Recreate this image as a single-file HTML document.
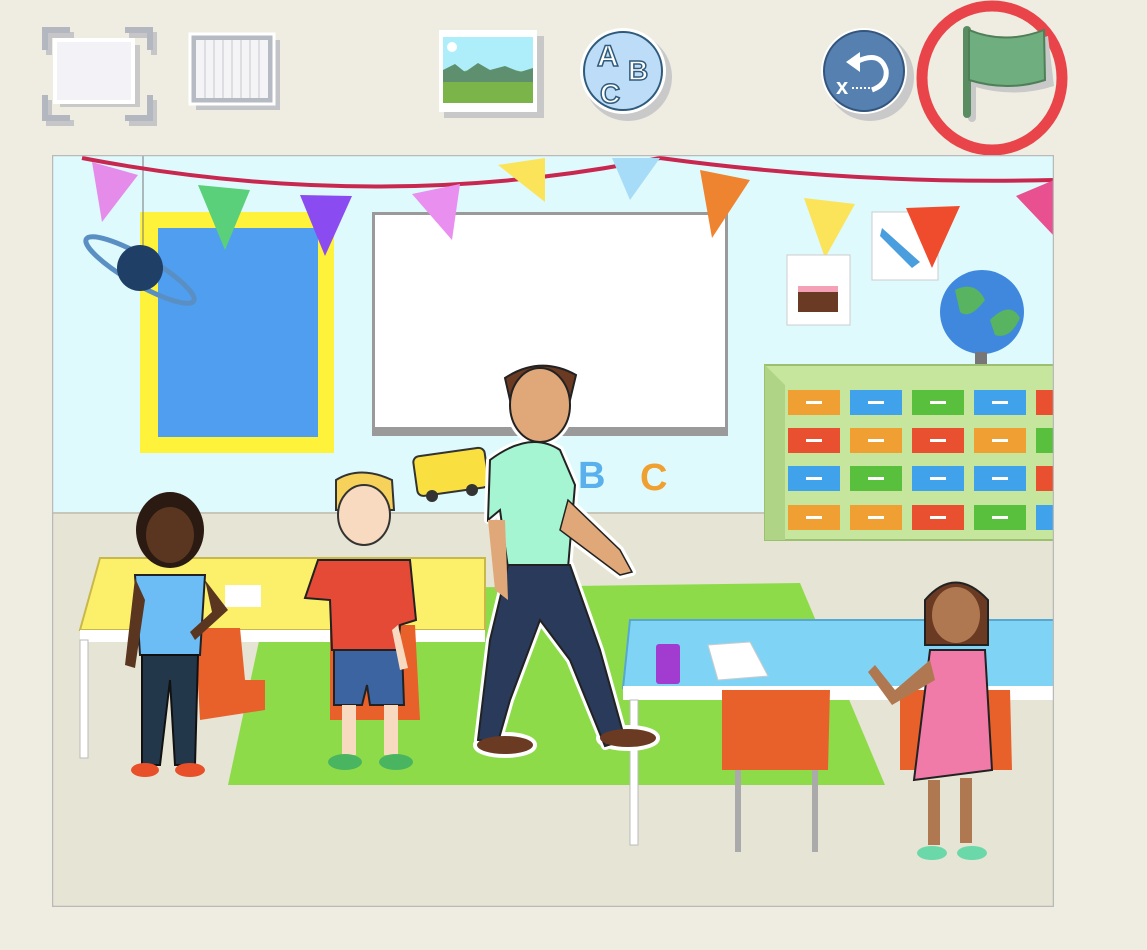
<!DOCTYPE html>
<html><head><style>
html,body{margin:0;padding:0;width:1147px;height:950px;overflow:hidden;background:#efece2;font-family:"Liberation Sans",sans-serif}
</style></head><body>
<svg width="1147" height="950" viewBox="0 0 1147 950" xmlns="http://www.w3.org/2000/svg">
<rect width="1147" height="950" fill="#efece2"/>
<!-- toolbar -->
<g>
 <g fill="none" stroke="#c6c6c8" stroke-width="6" transform="translate(4,5)">
  <path d="M45 50 V30 H70 M125 30 H150 V50 M45 95 V118 H70 M125 118 H150 V95"/>
 </g>
 <g fill="none" stroke="#b3b7c0" stroke-width="6">
  <path d="M45 50 V30 H70 M125 30 H150 V50 M45 95 V118 H70 M125 118 H150 V95"/>
 </g>
 <rect x="60" y="45" width="80" height="62" fill="#c9c9c9"/>
 <rect x="55" y="40" width="78" height="62" fill="#f3f2f6" stroke="#fff" stroke-width="4"/>
 <rect x="196" y="40" width="84" height="70" fill="#c3c4c8"/>
 <rect x="190" y="34" width="84" height="70" fill="#b5bac3" stroke="#fff" stroke-width="3"/>
 <rect x="196" y="40" width="72" height="58" fill="#f4f4f6"/>
 <g stroke="#d6d7dc" stroke-width="1.5"><line x1="205" y1="40" x2="205" y2="98"/><line x1="214" y1="40" x2="214" y2="98"/><line x1="223" y1="40" x2="223" y2="98"/><line x1="232" y1="40" x2="232" y2="98"/><line x1="241" y1="40" x2="241" y2="98"/><line x1="250" y1="40" x2="250" y2="98"/><line x1="259" y1="40" x2="259" y2="98"/></g>
 <rect x="444" y="36" width="100" height="82" fill="#c8c8c8"/>
 <rect x="439" y="30" width="98" height="82" fill="#fff"/>
 <rect x="443" y="37" width="90" height="66" fill="#aeeefb"/>
 <path d="M443 82 Q470 60 490 80 Q515 62 533 78 L533 103 L443 103Z" fill="#7bb54a"/>
 <path d="M443 70 L455 64 L465 72 L478 63 L490 70 L505 66 L520 72 L533 68 L533 82 L443 82Z" fill="#5e8f6e"/>
 <circle cx="452" cy="47" r="5" fill="#fff"/>
 <ellipse cx="628" cy="77" rx="44" ry="44" fill="#c9c9c9"/>
 <circle cx="623" cy="71" r="43" fill="#fff"/>
 <circle cx="623" cy="71" r="39" fill="#bcdcf8" stroke="#2f5a7a" stroke-width="2"/>
 <text x="597" y="66" font-size="30" font-weight="bold" fill="#fff" stroke="#2f5a7a" stroke-width="1.5">A</text>
 <text x="628" y="80" font-size="28" font-weight="bold" fill="#fff" stroke="#2f5a7a" stroke-width="1.5">B</text>
 <text x="600" y="103" font-size="28" font-weight="bold" fill="#fff" stroke="#2f5a7a" stroke-width="1.5">C</text>
 <circle cx="870" cy="77" r="44" fill="#c9c9c9"/>
 <circle cx="864" cy="71" r="43" fill="#fff"/>
 <circle cx="864" cy="71" r="40" fill="#5580b0" stroke="#34557c" stroke-width="2"/>
 <path d="M856 62 Q880 50 886 70 Q888 84 872 90" fill="none" stroke="#fff" stroke-width="5"/>
 <path d="M846 62 L860 52 L860 72Z" fill="#fff"/>
 <text x="836" y="94" font-size="22" font-weight="bold" fill="#fff">x</text>
 <line x1="852" y1="88" x2="880" y2="88" stroke="#fff" stroke-width="2" stroke-dasharray="2 2"/>
 <ellipse cx="992" cy="78" rx="70" ry="72" fill="none" stroke="#e8444a" stroke-width="11"/>
 <rect x="968" y="30" width="8" height="92" rx="4" fill="#c8c8c8"/>
 <path d="M966 28 Q1005 45 1044 32 L1050 82 Q1010 95 968 82Z" fill="#c9c9c9" transform="translate(4,4)"/>
 <rect x="963" y="26" width="8" height="92" rx="4" fill="#5a8c62"/>
 <path d="M969 30 Q1005 45 1044 30 L1045 80 Q1008 92 969 80Z" fill="#6fae7e" stroke="#4f7f58" stroke-width="2"/>
</g>
<!-- canvas -->
<svg x="52" y="155" width="1002" height="752" viewBox="52 155 1002 752" overflow="hidden">
 <rect x="52" y="155" width="1002" height="752" fill="#dffafd"/>
 <rect x="52" y="513" width="1002" height="394" fill="#e6e4d4"/>
 <line x1="52" y1="513" x2="1054" y2="513" stroke="#c8c6b8" stroke-width="2"/>
 <!-- window -->
 <rect x="140" y="212" width="194" height="241" fill="#fff23a"/>
 <rect x="158" y="228" width="160" height="209" fill="#4f9ef0"/>
 <line x1="143" y1="155" x2="143" y2="250" stroke="#777" stroke-width="1"/>
 <ellipse cx="140" cy="270" rx="62" ry="14" transform="rotate(30 140 270)" fill="none" stroke="#5a8fc4" stroke-width="5"/>
 <circle cx="140" cy="268" r="23" fill="#1f3f66"/>
 <!-- whiteboard -->
 <rect x="372" y="212" width="356" height="224" fill="#9a9a9a"/>
 <rect x="375" y="215" width="350" height="212" fill="#fff"/>
 <!-- bunting -->
 <path d="M82 158 Q380 215 660 158 Q860 185 1054 180" fill="none" stroke="#c8284f" stroke-width="4"/>
 <polygon points="92,162 138,175 102,222" fill="#e58cea"/>
 <polygon points="198,185 250,190 225,250" fill="#5ad07a"/>
 <polygon points="300,195 352,196 325,256" fill="#8a4cf0"/>
 <polygon points="412,194 460,184 452,240" fill="#e88ff0"/>
 <polygon points="498,165 545,158 545,202" fill="#fbe35a"/>
 <polygon points="612,158 660,158 630,200" fill="#a7dcf8"/>
 <polygon points="700,170 750,180 712,238" fill="#ef8430"/>
 <polygon points="804,198 855,204 825,258" fill="#fbe35a"/>
 <!-- posters -->
 <rect x="787" y="255" width="63" height="70" fill="#fff" stroke="#ccc"/>
 <rect x="798" y="288" width="40" height="24" fill="#6b3a24"/><rect x="798" y="286" width="40" height="6" fill="#f4a0b6"/>
 <rect x="872" y="212" width="66" height="68" fill="#fff" stroke="#ccc"/>
 <path d="M882 228 L920 262 L912 268 L880 236Z" fill="#4a9ede"/>
 <polygon points="906,208 960,206 932,268" fill="#ee4c2c"/>
 <polygon points="1016,196 1054,180 1054,236" fill="#e85090"/>
 <!-- globe -->
 <circle cx="982" cy="312" r="42" fill="#3f88de"/>
 <path d="M955 290 Q975 280 985 300 Q970 320 960 312Z M990 320 Q1010 300 1020 318 Q1010 340 995 335Z" fill="#58b460"/>
 <rect x="975" y="352" width="12" height="12" fill="#777"/><ellipse cx="980" cy="370" rx="22" ry="5" fill="#777"/>
 <!-- shelf -->
 <polygon points="765,365 1054,365 1054,540 765,540" fill="#c5e69c" stroke="#9ac070" stroke-width="2"/>
 <polygon points="765,365 785,385 785,540 765,540" fill="#b0d486"/>
 <g>
 <rect x="788" y="390" width="52" height="25" fill="#f0a032"/><rect x="850" y="390" width="52" height="25" fill="#3fa2ea"/><rect x="912" y="390" width="52" height="25" fill="#58c03c"/><rect x="974" y="390" width="52" height="25" fill="#3fa2ea"/><rect x="1036" y="390" width="20" height="25" fill="#e85030"/>
 <rect x="788" y="428" width="52" height="25" fill="#e85030"/><rect x="850" y="428" width="52" height="25" fill="#f0a032"/><rect x="912" y="428" width="52" height="25" fill="#e85030"/><rect x="974" y="428" width="52" height="25" fill="#f0a032"/><rect x="1036" y="428" width="20" height="25" fill="#58c03c"/>
 <rect x="788" y="466" width="52" height="25" fill="#3fa2ea"/><rect x="850" y="466" width="52" height="25" fill="#58c03c"/><rect x="912" y="466" width="52" height="25" fill="#3fa2ea"/><rect x="974" y="466" width="52" height="25" fill="#3fa2ea"/><rect x="1036" y="466" width="20" height="25" fill="#e85030"/>
 <rect x="788" y="505" width="52" height="25" fill="#f0a032"/><rect x="850" y="505" width="52" height="25" fill="#f0a032"/><rect x="912" y="505" width="52" height="25" fill="#e85030"/><rect x="974" y="505" width="52" height="25" fill="#58c03c"/><rect x="1036" y="505" width="20" height="25" fill="#3fa2ea"/>
 </g>
 <g fill="#fff"><rect x="806" y="401" width="16" height="3"/><rect x="868" y="401" width="16" height="3"/><rect x="930" y="401" width="16" height="3"/><rect x="992" y="401" width="16" height="3"/><rect x="806" y="439" width="16" height="3"/><rect x="868" y="439" width="16" height="3"/><rect x="930" y="439" width="16" height="3"/><rect x="992" y="439" width="16" height="3"/><rect x="806" y="477" width="16" height="3"/><rect x="868" y="477" width="16" height="3"/><rect x="930" y="477" width="16" height="3"/><rect x="992" y="477" width="16" height="3"/><rect x="806" y="516" width="16" height="3"/><rect x="868" y="516" width="16" height="3"/><rect x="930" y="516" width="16" height="3"/><rect x="992" y="516" width="16" height="3"/></g>
 <!-- bus + letters -->
 <rect x="415" y="452" width="72" height="40" rx="6" fill="#f9e040" stroke="#333" stroke-width="2" transform="rotate(-8 450 472)"/>
 <circle cx="432" cy="496" r="6" fill="#333"/><circle cx="472" cy="490" r="6" fill="#333"/>
 <text x="578" y="488" font-size="38" font-weight="bold" fill="#5ab0ec">B</text>
 <text x="640" y="490" font-size="38" font-weight="bold" fill="#f0a030">C</text>
 <!-- rug -->
 <polygon points="270,590 800,583 885,785 228,785" fill="#8edb4a"/>
 <!-- yellow table -->
 <polygon points="100,558 485,558 485,630 80,630" fill="#fcf06a" stroke="#c8b84a" stroke-width="2"/>
 <rect x="80" y="630" width="405" height="12" fill="#fff"/>
 <rect x="80" y="640" width="8" height="118" fill="#fff" stroke="#bbb"/>
 <rect x="225" y="585" width="36" height="22" fill="#fff"/>
 <!-- chairs -->
 <path d="M195 628 L240 628 L245 680 L265 680 L265 710 L200 720Z" fill="#e8612b"/>
 <path d="M330 625 L415 625 L420 720 L330 720Z" fill="#e8612b"/>
 <!-- blue table -->
 <polygon points="630,620 1054,620 1054,688 623,688" fill="#7fd4f5" stroke="#56a8d0" stroke-width="2"/>
 <rect x="623" y="686" width="431" height="14" fill="#fff"/>
 <rect x="630" y="700" width="8" height="145" fill="#fff" stroke="#bbb"/>
 <rect x="656" y="644" width="24" height="40" rx="3" fill="#a23cd0"/>
 <polygon points="708,645 750,642 768,676 718,680" fill="#fff" stroke="#ccc"/>
 <path d="M722 690 L830 690 L828 770 L722 770Z" fill="#e8612b"/>
 <rect x="735" y="770" width="6" height="82" fill="#aaa"/><rect x="812" y="770" width="6" height="82" fill="#aaa"/>
 <path d="M900 690 L1010 690 L1012 770 L900 770Z" fill="#e8612b"/>
 <!-- girl left -->
 <g>
  <ellipse cx="170" cy="530" rx="34" ry="38" fill="#2a1a12"/>
  <ellipse cx="170" cy="535" rx="24" ry="28" fill="#5a3620"/>
  <path d="M135 575 L205 575 L200 655 L140 655Z" fill="#6cbcf5" stroke="#222" stroke-width="2"/>
  <path d="M142 655 L198 655 L195 765 L175 765 L170 680 L160 765 L142 765Z" fill="#22384a" stroke="#111" stroke-width="2"/>
  <path d="M135 578 L125 665 L135 668 L145 600Z M205 580 L228 610 L195 640 L190 632 L212 612Z" fill="#5a3620"/>
  <ellipse cx="145" cy="770" rx="14" ry="7" fill="#e8502a"/><ellipse cx="190" cy="770" rx="15" ry="7" fill="#e8502a"/>
 </g>
 <!-- boy -->
 <g>
  <path d="M336 480 Q360 465 392 480 L394 510 L336 510Z" fill="#f7d25a" stroke="#333" stroke-width="2"/>
  <ellipse cx="364" cy="515" rx="26" ry="30" fill="#f8dac0" stroke="#333" stroke-width="2"/>
  <path d="M318 560 L410 560 L416 620 L400 625 L398 650 L332 650 L330 600 L305 598Z" fill="#e54a36" stroke="#222" stroke-width="2"/>
  <path d="M334 650 L402 650 L404 705 L370 705 L367 685 L362 705 L334 705Z" fill="#3c64a0" stroke="#222" stroke-width="2"/>
  <rect x="342" y="705" width="14" height="50" fill="#f8dac0"/><rect x="384" y="705" width="14" height="50" fill="#f8dac0"/>
  <ellipse cx="345" cy="762" rx="17" ry="8" fill="#4ab560"/><ellipse cx="396" cy="762" rx="17" ry="8" fill="#4ab560"/>
  <path d="M398 625 L408 668 L400 670 L392 630Z" fill="#f8dac0"/>
 </g>
 <!-- man -->
 <g stroke="#fff" stroke-width="8" stroke-linejoin="round" fill="#fff">
  <ellipse cx="540" cy="405" rx="30" ry="37"/>
  <path d="M490 460 Q530 430 560 450 L575 485 L568 568 L508 568 L500 510 L488 520Z"/>
  <path d="M508 565 L570 565 L600 650 L625 740 L605 746 L570 660 L540 620 L510 700 L498 742 L478 740 L490 640Z"/>
  <path d="M568 500 L620 550 L632 572 L620 575 L600 560 L560 530Z"/>
  <ellipse cx="505" cy="745" rx="28" ry="9"/><ellipse cx="628" cy="738" rx="28" ry="9"/>
 </g>
 <g>
  <path d="M505 378 Q540 355 576 375 L570 400 L510 400Z" fill="#6b3a22" stroke="#222" stroke-width="2"/>
  <ellipse cx="540" cy="405" rx="30" ry="37" fill="#e0a878" stroke="#222" stroke-width="2"/>
  <path d="M490 460 Q530 430 560 450 L575 485 L568 568 L508 568 L500 510 L488 520Z" fill="#a6f5d2" stroke="#222" stroke-width="2"/>
  <path d="M508 565 L570 565 L600 650 L625 740 L605 746 L570 660 L540 620 L510 700 L498 742 L478 740 L490 640Z" fill="#2a3a5a" stroke="#222" stroke-width="2"/>
  <ellipse cx="505" cy="745" rx="28" ry="9" fill="#6b3a22"/><ellipse cx="628" cy="738" rx="28" ry="9" fill="#6b3a22"/>
  <path d="M488 520 L495 590 L508 600 L505 520Z" fill="#e0a878"/>
  <path d="M568 500 L620 550 L632 572 L620 575 L600 560 L560 530Z" fill="#e0a878" stroke="#222" stroke-width="1.5"/>
 </g>
 <!-- girl right -->
 <g>
  <path d="M925 600 Q955 565 988 600 L988 645 L925 645Z" fill="#6a3a22" stroke="#222" stroke-width="2"/>
  <ellipse cx="956" cy="615" rx="24" ry="28" fill="#b07850"/>
  <path d="M930 650 L985 650 L992 770 L914 780Z" fill="#f07aa8" stroke="#222" stroke-width="2"/>
  <rect x="928" y="780" width="12" height="65" fill="#b07850"/><rect x="960" y="778" width="12" height="65" fill="#b07850"/>
  <ellipse cx="932" cy="853" rx="15" ry="7" fill="#6ad8a8"/><ellipse cx="972" cy="853" rx="15" ry="7" fill="#6ad8a8"/>
  <path d="M930 660 L895 690 L875 665 L868 672 L892 705 L935 680Z" fill="#b07850"/>
 </g>
 <rect x="52.5" y="155.5" width="1001" height="751" fill="none" stroke="#b9b9b9" stroke-width="1.5"/>
</svg>
</svg>
</body></html>
